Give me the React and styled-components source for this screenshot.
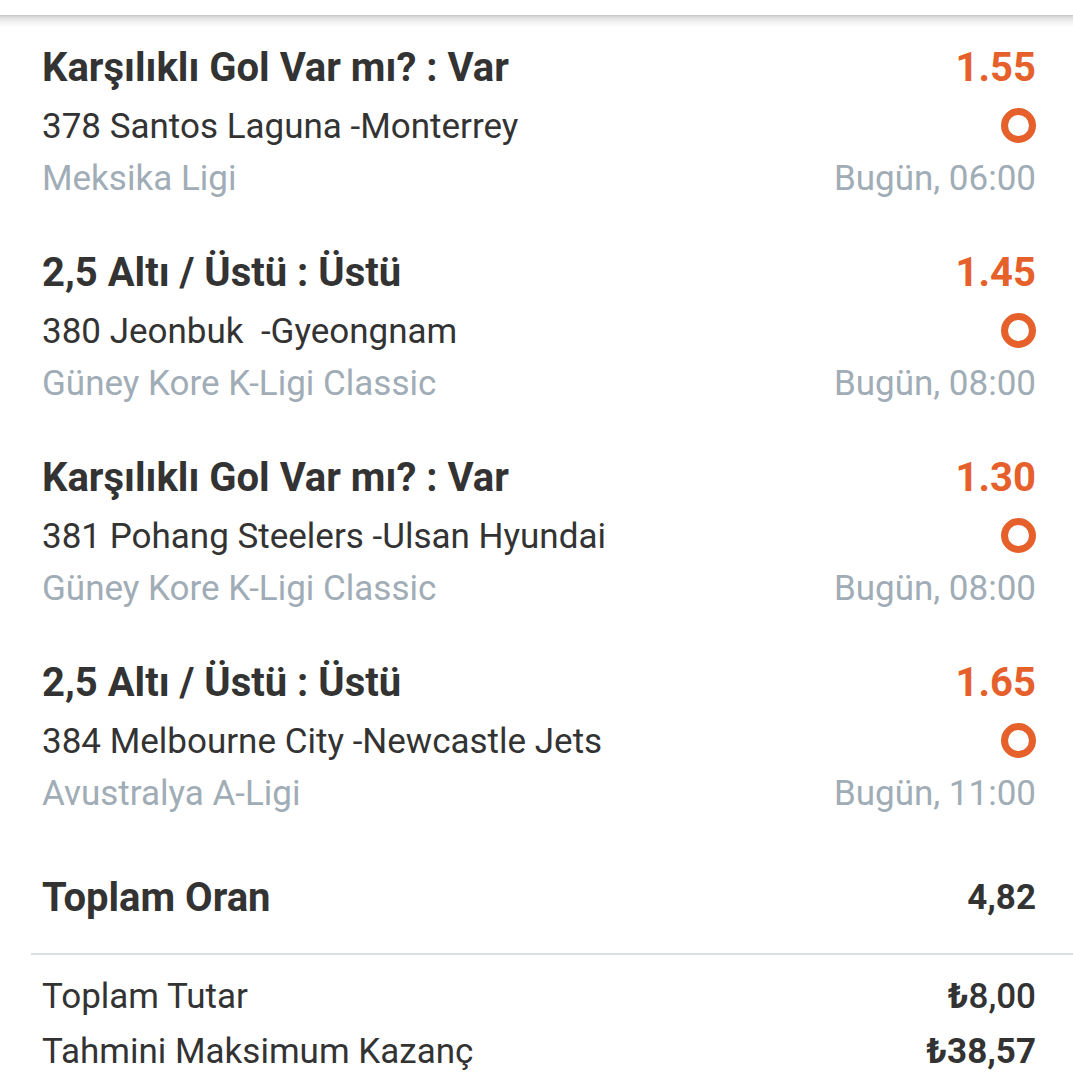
import React from "react";
import styled, { createGlobalStyle } from "styled-components";

const Global = createGlobalStyle`
  html, body { margin: 0; padding: 0; background: #fff; }
  body { font-family: Roboto, "Noto Sans", "DejaVu Sans", sans-serif; color: #333; }
`;

const Page = styled.div`
  width: 1073px;
  background: #fff;
  display: flex;
  flex-direction: column;
  & > * { flex-shrink: 0; }
`;

const TopShade = styled.div`
  margin-top: 15px;
  height: 12px;
  background: linear-gradient(#c4c4c4 0px, #dcdcdc 2px, #f2f2f2 7px, #ffffff 12px);
`;

const List = styled.div`
  padding: 16px 37px 0 42px;
  display: flex;
  flex-direction: column;
  gap: 43px;
`;

const Bet = styled.div`
  display: flex;
  flex-direction: column;
`;

const Row = styled.div`
  display: flex;
  justify-content: space-between;
  align-items: center;
  margin-top: ${(p) => p.$mt || 0}px;
`;

const Market = styled.div`
  font-size: 40px;
  font-weight: 700;
  line-height: 50px;
  color: #333;
`;

const Odd = styled.div`
  font-size: 40px;
  font-weight: 700;
  line-height: 50px;
  color: #e6602b;
`;

const Match = styled.div`
  font-size: 35px;
  line-height: 52px;
  color: #333;
  white-space: pre;
`;

const Ring = styled.div`
  width: 35px;
  height: 35px;
  box-sizing: border-box;
  border-radius: 50%;
  border: 7.5px solid #e6602b;
  margin-bottom: 4px;
`;

const Meta = styled.div`
  font-size: 35px;
  line-height: 52px;
  color: #a0acb6;
`;

const Summary = styled.div`
  padding: 48px 37px 0 42px;
  display: flex;
  justify-content: space-between;
  align-items: center;
`;

const SummaryLabel = styled.div`
  font-size: 40px;
  font-weight: 700;
  line-height: 60px;
  color: #333;
`;

const SummaryValue = styled.div`
  font-size: 35px;
  font-weight: 700;
  line-height: 60px;
  color: #333;
`;

const Divider = styled.div`
  margin: 25px 0 0 31px;
  height: 2px;
  background: #dcdfe2;
`;

const Totals = styled.div`
  padding: 14px 37px 0 42px;
  display: flex;
  flex-direction: column;
`;

const TotalRow = styled.div`
  display: flex;
  justify-content: space-between;
  align-items: center;
  height: 55px;
`;

const TotalLabel = styled.div`
  font-size: 35px;
  line-height: 55px;
  color: #333;
`;

const TotalValue = styled.div`
  font-size: 35px;
  font-weight: ${(p) => (p.$strong ? 700 : 500)};
  line-height: 55px;
  color: #333;
`;

const Lira = styled.span`
  font-weight: 700;
`;

const bets = [
  {
    market: "Karşılıklı Gol Var mı? : Var",
    odd: "1.55",
    match: "378 Santos Laguna -Monterrey",
    league: "Meksika Ligi",
    time: "Bugün, 06:00",
  },
  {
    market: "2,5 Altı / Üstü : Üstü",
    odd: "1.45",
    match: "380 Jeonbuk  -Gyeongnam",
    league: "Güney Kore K-Ligi Classic",
    time: "Bugün, 08:00",
  },
  {
    market: "Karşılıklı Gol Var mı? : Var",
    odd: "1.30",
    match: "381 Pohang Steelers -Ulsan Hyundai",
    league: "Güney Kore K-Ligi Classic",
    time: "Bugün, 08:00",
  },
  {
    market: "2,5 Altı / Üstü : Üstü",
    odd: "1.65",
    match: "384 Melbourne City -Newcastle Jets",
    league: "Avustralya A-Ligi",
    time: "Bugün, 11:00",
  },
];

export default function App() {
  return (
    <Page>
      <Global />
      <TopShade />
      <List>
        {bets.map((b, i) => (
          <Bet key={i}>
            <Row>
              <Market>{b.market}</Market>
              <Odd>{b.odd}</Odd>
            </Row>
            <Row $mt={8}>
              <Match>{b.match}</Match>
              <Ring />
            </Row>
            <Row>
              <Meta>{b.league}</Meta>
              <Meta>{b.time}</Meta>
            </Row>
          </Bet>
        ))}
      </List>
      <Summary>
        <SummaryLabel>Toplam Oran</SummaryLabel>
        <SummaryValue>4,82</SummaryValue>
      </Summary>
      <Divider />
      <Totals>
        <TotalRow>
          <TotalLabel>Toplam Tutar</TotalLabel>
          <TotalValue>
            <Lira>₺</Lira>8,00
          </TotalValue>
        </TotalRow>
        <TotalRow>
          <TotalLabel>Tahmini Maksimum Kazanç</TotalLabel>
          <TotalValue $strong>
            <Lira>₺</Lira>38,57
          </TotalValue>
        </TotalRow>
      </Totals>
    </Page>
  );
}
